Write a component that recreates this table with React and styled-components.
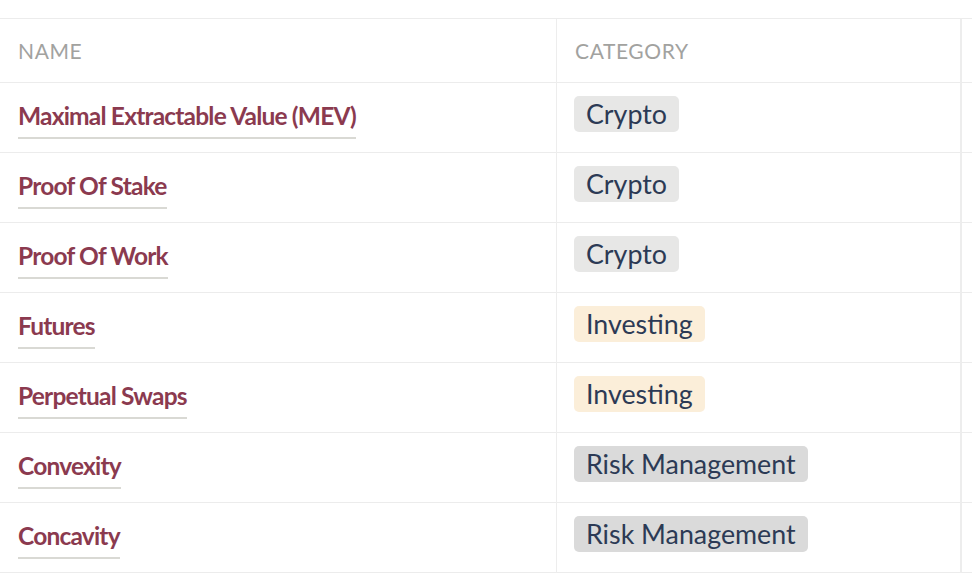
import React from 'react';
import styled, { createGlobalStyle } from 'styled-components';

const GlobalStyle = createGlobalStyle`
  html, body {
    margin: 0;
    padding: 0;
    background: #fff;
    overflow: hidden;
  }
  body {
    font-family: Lato, "Open Sans", sans-serif;
  }
`;

const terms = [
  { name: 'Maximal Extractable Value (MEV)', category: 'Crypto' },
  { name: 'Proof Of Stake', category: 'Crypto' },
  { name: 'Proof Of Work', category: 'Crypto' },
  { name: 'Futures', category: 'Investing' },
  { name: 'Perpetual Swaps', category: 'Investing' },
  { name: 'Convexity', category: 'Risk Management' },
  { name: 'Concavity', category: 'Risk Management' },
];

const tagColors = {
  Crypto: '#e7e7e6',
  Investing: '#fbeed9',
  'Risk Management': '#dadada',
};

const App = () => {
  return <Page>
    <GlobalStyle />
    <Table>
      <HeadCell>Name</HeadCell>
      <HeadCell>Category</HeadCell>
      <HeadCell />
      {terms.map(term => (
        <React.Fragment key={term.name}>
          <NameCell>
            <TermLink href="#">{term.name}</TermLink>
          </NameCell>
          <Cell>
            <Tag bg={tagColors[term.category]}>{term.category}</Tag>
          </Cell>
          <Cell />
        </React.Fragment>
      ))}
    </Table>
  </Page>;
};

const Page = styled.div`
  padding-top: 18px;
  width: 100%;
  overflow: hidden;
`;

const Table = styled.div`
  display: grid;
  grid-template-columns: 557px 405px 338px;
  width: 1300px;
  border-top: 1px solid #ececec;
`;

const HeadCell = styled.div`
  height: 64px;
  box-sizing: border-box;
  padding: 0 18px;
  display: flex;
  align-items: center;
  font-size: 21px;
  letter-spacing: 0.6px;
  text-transform: uppercase;
  color: #a2a29f;
  border-bottom: 1px solid #ececec;
  &:not(:last-child) {
    border-right: 2px solid #ededed;
  }
  &:first-child {
    border-right: 1px solid #ededed;
  }
`;

const Cell = styled.div`
  height: 70px;
  box-sizing: border-box;
  padding: 13px 18px 0 17px;
  border-bottom: 1px solid #ececec;
  &:not(:last-child) {
    border-right: 2px solid #ededed;
  }
`;

const NameCell = styled(Cell)`
  padding: 17px 18px 0 18px;
  border-right: 1px solid #ededed !important;
`;

const TermLink = styled.a`
  display: inline-block;
  font-size: 24.5px;
  font-weight: 700;
  letter-spacing: -0.8px;
  line-height: 31px;
  padding-bottom: 6px;
  color: #8b3a4f;
  text-decoration: none;
  border-bottom: 2px solid #d9d9d4;
`;

const Tag = styled.span`
  display: inline-block;
  height: 36px;
  line-height: 36px;
  padding: 0 12px;
  border-radius: 5px;
  font-size: 26.8px;
  color: #2c3a55;
  background: ${props => props.bg};
`;

export default App;
